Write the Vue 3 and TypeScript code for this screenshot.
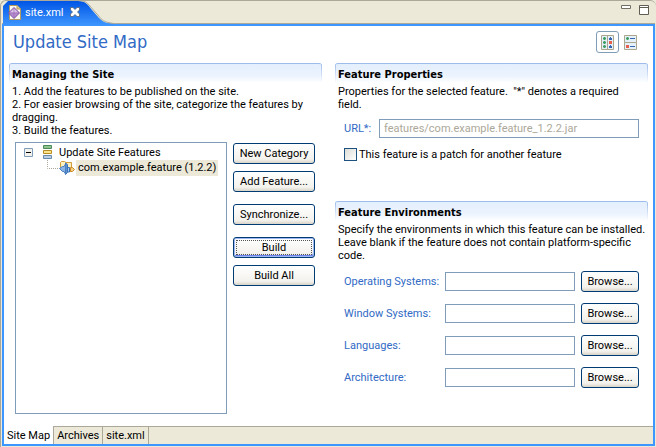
<script setup lang="ts">
import { ref } from 'vue'

interface Environment {
  id: string
  label: string
}

const environments: Environment[] = [
  { id: 'os', label: 'Operating Systems:' },
  { id: 'ws', label: 'Window Systems:' },
  { id: 'nl', label: 'Languages:' },
  { id: 'arch', label: 'Architecture:' },
]

const values = ref<Record<string, string>>({ os: '', ws: '', nl: '', arch: '' })
const url = ref('features/com.example.feature_1.2.2.jar')
const isPatch = ref(false)
const expanded = ref(true)
const layout = ref<'horizontal' | 'vertical'>('horizontal')
const pages: string[] = ['Site Map', 'Archives', 'site.xml']
const page = ref('Site Map')
</script>

<template>
  <div class="editor">
    <header class="tabbar">
      <svg class="tabshape" width="114" height="26" viewBox="0 0 114 26" aria-hidden="true">
        <defs>
          <linearGradient id="tabfill" x1="0" y1="0" x2="0" y2="1">
            <stop offset="0" stop-color="#0055e5" />
            <stop offset="1" stop-color="#3e97ff" />
          </linearGradient>
        </defs>
        <path d="M1 26V6L6 1H76C84 1 86 5 90 10L97 18C101 22 104 23 112 24V26Z" fill="url(#tabfill)" />
        <path d="M76 .5C85 .5 87 5 91 9.500L98 17.500C101 21 104 22.500 112 23.500" fill="none" stroke="#aca899" />
      </svg>
      <div class="tab">
        <svg width="14" height="15" viewBox="0 0 14 15" aria-hidden="true">
          <path d="M1.500 .5H9L12.500 4V14.500H1.500Z" fill="#fdfbf0" stroke="#b39a60" />
          <path d="M9 .5V4H12.500" fill="#e9d08c" stroke="#b39a60" />
          <path d="M6 2.500L11.500 8L6 13.500L.5 8Z" fill="#b58bcd" stroke="#76509c" />
          <path d="M6 3.500L10 7.500H2Z" fill="#dfc6ec" />
          <path d="M6 3V13M1 8H11" stroke="#9468b4" stroke-width=".6" />
        </svg>
        <span class="tabname">site.xml</span>
        <button class="close" aria-label="Close">
          <svg width="10" height="10" viewBox="0 0 10 10">
            <path d="M.5 .5H3L5 2.500L7 .5H9.500V3L7.500 5L9.500 7V9.500H7L5 7.500L3 9.500H.5V7L2.500 5L.5 3Z" fill="#fff" stroke="#5b6272" stroke-width=".8" />
          </svg>
        </button>
      </div>
      <div class="winbuttons">
        <button aria-label="Minimize">
          <svg width="10" height="10" viewBox="0 0 10 10"><path d="M.5 .5H9.500V3.500H.5Z" fill="#fff" stroke="#716f64" /></svg>
        </button>
        <button aria-label="Maximize">
          <svg width="10" height="10" viewBox="0 0 10 10"><path d="M.5 .5H9.500V9.500H.5ZM.5 2.500H9.500" fill="#fff" stroke="#5f5d54" /></svg>
        </button>
      </div>
    </header>

    <main class="form">
      <div class="heading">
        <h1>Update Site Map</h1>
        <div class="modes">
          <button :class="{ on: layout === 'horizontal' }" aria-label="Horizontal orientation" @click="layout = 'horizontal'">
            <svg width="13" height="15" viewBox="0 0 13 15">
              <path d="M.5 .5H12.500V14.500H.5Z" fill="#e4f1fa" stroke="#aca68c" />
              <path d="M6.500 1V14" stroke="#aca68c" />
              <path d="M2 3.500H5M3.500 2V5M2 7.500H5M3.500 6V9M2 11.500H5M3.500 10V13" stroke="#3f9f63" stroke-width="1.600" />
              <path d="M9 2H10V3H11V5H8V3H9ZM9 10H10V11H11V13H8V11H9Z" fill="#3866b0" />
              <path d="M8 6H11V9H8Z" fill="#e8604c" />
            </svg>
          </button>
          <button :class="{ on: layout === 'vertical' }" aria-label="Vertical orientation" @click="layout = 'vertical'">
            <svg width="13" height="15" viewBox="0 0 13 15">
              <path d="M.5 .5H12.500V7.500H.5ZM.5 7.500H12.500V14.500H.5Z" fill="#e4f1fa" stroke="#aca68c" />
              <path d="M2 3.500H5M3.500 2V5" stroke="#3f9f63" stroke-width="1.600" />
              <path d="M2 10H5V13H2Z" fill="#e8604c" />
              <path d="M6 3.500H11M6 11.500H11" stroke="#3866b0" />
            </svg>
          </button>
        </div>
      </div>

      <div class="columns">
        <section class="column">
          <h2>Managing the Site</h2>
          <p>1. Add the features to be published on the site.<br />2. For easier browsing of the site, categorize the features by dragging.<br />3. Build the features.</p>
          <div class="site">
            <ul class="tree" role="tree">
              <li role="treeitem" :aria-expanded="expanded">
                <div class="node">
                  <button class="expander" aria-label="Toggle features" @click="expanded = !expanded">
                    <svg width="9" height="9" viewBox="0 0 9 9">
                      <path d="M.5 .5H8.500V8.500H.5Z" fill="#f4f2ec" stroke="#7f9db9" />
                      <path d="M2 4.500H7" stroke="#000" />
                      <path v-if="!expanded" d="M4.500 2V7" stroke="#000" />
                    </svg>
                  </button>
                  <svg class="sitesicon" width="10" height="14" viewBox="0 0 10 14" aria-hidden="true">
                    <path d="M.5 .5H8.500V3.500H.5Z" fill="#8fc48c" stroke="#4b8a5c" />
                    <path d="M.5 5.500H8.500V8.500H.5Z" fill="#fbe694" stroke="#b88a22" />
                    <path d="M.5 10.500H8.500V13.500H.5Z" fill="#b9d0e6" stroke="#6888ac" />
                  </svg>
                  <span>Update Site Features</span>
                </div>
                <ul v-if="expanded" role="group">
                  <li class="node child" role="treeitem" aria-selected="true">
                    <svg class="branch" width="12" height="16" viewBox="0 0 12 16" aria-hidden="true">
                      <path d="M.5 0V8.500H12" fill="none" stroke="#aca899" stroke-dasharray="1 1" />
                    </svg>
                    <svg class="featureicon" width="16" height="16" viewBox="0 0 16 16" aria-hidden="true">
                      <path d="M1.500 7V2.500L2.500 1.500H5.500L7 2.500H12.500V11.500H4Z" fill="#fdf0c0" stroke="#d19b35" />
                      <path d="M6.500 3V14.500L8.500 12.500V4.500Z" fill="#5c92d2" stroke="#3b72b7" />
                      <path d="M.5 8.500L3.500 6.500H5L6.500 4V14L5 11.500H3.500Z" fill="#8bb4e4" stroke="#4a7fc2" />
                      <path d="M9 7.500H10.500V12H9" fill="#a9c9eb" stroke="#3b72b7" />
                      <path d="M11.500 7.500H13.500L15.500 9.500L13.500 11.500H11.500Z" fill="#f5cf7c" stroke="#c98a2c" />
                    </svg>
                    <span class="selected">com.example.feature (1.2.2)</span>
                  </li>
                </ul>
              </li>
            </ul>
            <div class="actions">
              <button class="push">New Category</button>
              <button class="push">Add Feature...</button>
              <button class="push apart">Synchronize...</button>
              <button class="push apart default">Build</button>
              <button class="push">Build All</button>
            </div>
          </div>
        </section>

        <div class="column">
          <section class="properties">
            <h2>Feature Properties</h2>
            <p>Properties for the selected feature.&nbsp; "*" denotes a required<br />field.</p>
            <div class="urlrow">
              <label for="url">URL*:</label>
              <input id="url" v-model="url" type="text" disabled />
            </div>
            <div class="patch">
              <input id="patch" v-model="isPatch" type="checkbox" />
              <label for="patch">This feature is a patch for another feature</label>
            </div>
          </section>
          <section>
            <h2>Feature Environments</h2>
            <p>Specify the environments in which this feature can be installed. Leave blank if the feature does not contain platform-specific code.</p>
            <div class="environments">
              <div v-for="env in environments" :key="env.id" class="envrow">
                <label :for="env.id">{{ env.label }}</label>
                <input :id="env.id" v-model="values[env.id]" type="text" />
                <button class="push">Browse...</button>
              </div>
            </div>
          </section>
        </div>
      </div>
    </main>

    <nav class="pages">
      <button v-for="name in pages" :key="name" :class="{ active: name === page }" @click="page = name">{{ name }}</button>
    </nav>
  </div>
</template>

<style>
body {
  background: #ece9d8;
}
</style>

<style scoped>
.editor {
  box-sizing: border-box;
  display: flex;
  flex-direction: column;
  min-height: 100vh;
  padding: 0 1px 1px;
  border: solid #aca899;
  border-width: 1px 0 0 1px;
  border-radius: 6px 6px 0 0;
  background: #ece9d8;
  font: 11px/13px Tahoma, Roboto, sans-serif;
  color: #000;
}

button,
input {
  box-sizing: border-box;
  margin: 0;
  padding: 0;
  font: inherit;
  color: inherit;
}

button {
  border: 0;
  background: none;
}

svg {
  display: block;
  flex: none;
}

ul {
  margin: 0;
  padding: 0;
  list-style: none;
}

.tabbar {
  position: relative;
  display: flex;
  justify-content: space-between;
  height: 22px;
  border-bottom: 1px solid #aca899;
}

.tabshape {
  position: absolute;
  left: 0;
  top: -1px;
}

.tab {
  position: relative;
  display: flex;
  align-items: center;
  padding-left: 6px;
  color: #fff;
}

.tabname {
  margin: 0 7px 0 3px;
}

.winbuttons {
  display: flex;
  gap: 8px;
  padding: 4px 6px 0 0;
}

.winbuttons button {
  height: 10px;
}

.form {
  flex: 1;
  display: flex;
  flex-direction: column;
  padding: 0 5px 12px;
  border: solid #3e97ff;
  border-width: 2px 2px 0;
  background: #fff;
}

.heading {
  display: flex;
  justify-content: space-between;
  height: 37px;
  padding: 0 6px 0 4px;
}

h1 {
  margin: 0;
  font: 18px/31px Tahoma, "DejaVu Sans Condensed", sans-serif;
  color: #316ac5;
}

.modes {
  display: flex;
  padding-top: 5px;
}

.modes button {
  display: grid;
  place-items: center;
  width: 23px;
  height: 22px;
  border: 1px solid transparent;
  border-radius: 3px;
}

.modes .on {
  border-color: #7f9db9;
}

.columns {
  flex: 1;
  display: grid;
  grid-template-columns: 1fr 1fr;
  gap: 13px;
}

.column {
  display: flex;
  flex-direction: column;
  min-width: 0;
}

h2 {
  margin: 0;
  height: 20px;
  padding: 0 3px;
  border-top: 1px solid #9dbbeb;
  border-radius: 3px 3px 0 0;
  background:
    linear-gradient(#9dbbeb, #fff) left / 1px 100% no-repeat,
    linear-gradient(#9dbbeb, #fff) right / 1px 100% no-repeat,
    linear-gradient(#e4effd, #ebf3fe 60%, #fff);
  box-sizing: border-box;
  font: bold 11px/21px Tahoma, "DejaVu Sans Condensed", sans-serif;
}

p {
  margin: 2px 0 0;
  padding-left: 3px;
}

.site {
  flex: 1;
  display: flex;
  gap: 6px;
  padding: 5px 7px 0 6px;
}

.tree {
  flex: 1;
  min-width: 0;
  box-sizing: border-box;
  padding: 1px 7px;
  border: 1px solid #7f9db9;
}

.node {
  display: flex;
  align-items: center;
  height: 16px;
  white-space: nowrap;
}

.expander {
  margin-left: 1px;
}

.sitesicon {
  margin: 0 6px 0 10px;
}

.child {
  padding-left: 24px;
}

.featureicon {
  margin-right: 1px;
}

.selected {
  padding: 0 2px;
  line-height: 16px;
  background: #ece9d8;
}

.actions {
  flex: none;
  display: flex;
  flex-direction: column;
  gap: 7px;
  width: 82px;
  padding-top: 1px;
}

.push {
  height: 21px;
  border: 1px solid #003c74;
  border-radius: 3px;
  background: linear-gradient(#fff, #f3f2ed 80%, #d9d4c8);
  white-space: nowrap;
}

.apart {
  margin-top: 5px;
}

.default {
  box-shadow: inset 0 0 0 1px #9db8f0, inset -1px -2px #6982ee;
  outline: 1px dotted #555;
  outline-offset: -4px;
}

.properties {
  height: 138px;
}

input[type="text"] {
  min-width: 0;
  height: 19px;
  padding: 0 4px;
  border: 1px solid #7f9db9;
  background: #fff;
}

input:disabled {
  color: #aca899;
}

.urlrow,
.envrow {
  display: grid;
  grid-template-columns: 30px 1fr;
  gap: 5px;
  align-items: center;
  padding: 0 9px;
  color: #316ac5;
  white-space: nowrap;
}

.urlrow {
  margin-top: 8px;
}

.patch {
  display: flex;
  align-items: center;
  gap: 2px;
  margin-top: 10px;
  padding-left: 9px;
}

.patch input {
  appearance: none;
  width: 13px;
  height: 13px;
  border: 1px solid #1c5180;
  background: linear-gradient(135deg, #dcdcd7, #fff);
}

.patch input:checked {
  background: #21a121;
}

.environments {
  display: flex;
  flex-direction: column;
  gap: 11px;
  margin-top: 9px;
}

.envrow {
  grid-template-columns: 95px 1fr 58px;
  gap: 6px;
}

.envrow .push {
  color: #000;
}

.pages {
  display: flex;
  height: 18px;
  border: solid #3e97ff;
  border-width: 0 2px 2px;
  box-shadow: inset 0 1px #aca899;
}

.pages button {
  padding: 0 3px;
  border-right: 1px solid #aca899;
}

.pages .active {
  background: #fff;
}
</style>
